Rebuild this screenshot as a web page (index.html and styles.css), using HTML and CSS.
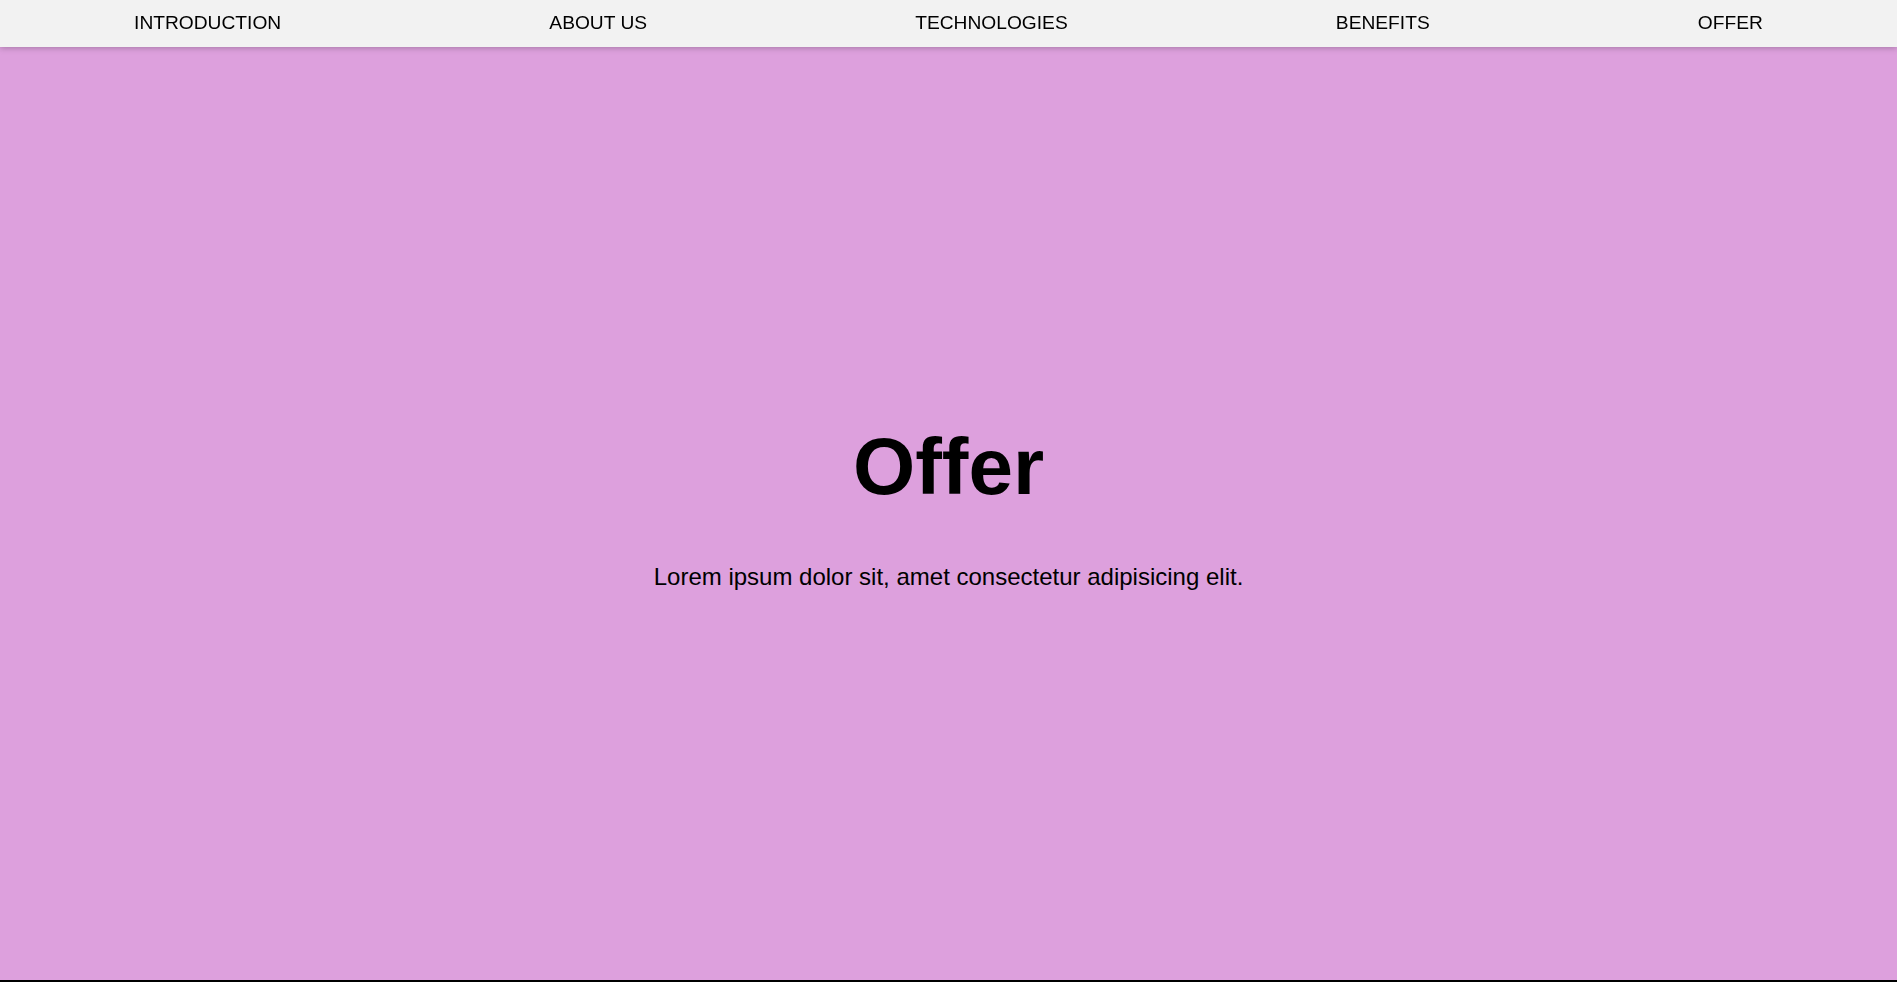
FILE: index.html
```html
<!DOCTYPE html>
<html lang="en">
<head>
<meta charset="utf-8">
<title>Offer</title>
<link rel="stylesheet" href="styles.css">
</head>
<body>
<nav class="topnav">
  <a class="topnav-link" href="#introduction">INTRODUCTION</a>
  <a class="topnav-link" href="#about">ABOUT US</a>
  <a class="topnav-link" href="#technologies">TECHNOLOGIES</a>
  <a class="topnav-link" href="#benefits">BENEFITS</a>
  <a class="topnav-link" href="#offer">OFFER</a>
</nav>
<section class="hero" id="offer">
  <div class="hero-content">
    <h1 class="hero-title">Offer</h1>
    <p class="hero-text">Lorem ipsum dolor sit, amet consectetur adipisicing elit.</p>
  </div>
</section>
</body>
</html>
```
FILE: styles.css
```css
* { box-sizing: border-box; }
html, body { margin: 0; padding: 0; }
body {
  background: #000;
  font-family: "Liberation Sans", Arial, sans-serif;
  color: #000;
}
.topnav {
  position: fixed;
  top: 0;
  left: 0;
  right: 0;
  height: 47px;
  padding-bottom: 2px;
  background: #f2f2f2;
  display: flex;
  justify-content: space-around;
  align-items: center;
  box-shadow: 0 1px 6px rgba(0, 0, 0, 0.25);
  z-index: 10;
}
.topnav-link {
  color: #000;
  text-decoration: none;
  font-size: 19.2px;
}
.hero {
  height: 980px;
  padding-top: 2px;
  background: #dda0dd;
  display: flex;
  align-items: center;
  justify-content: center;
  text-align: center;
}
.hero-title {
  font-size: 80px;
  font-weight: bold;
  margin: 53.6px 0 49.6px;
}
.hero-text {
  font-size: 24px;
  margin: 24px 0;
}
```
